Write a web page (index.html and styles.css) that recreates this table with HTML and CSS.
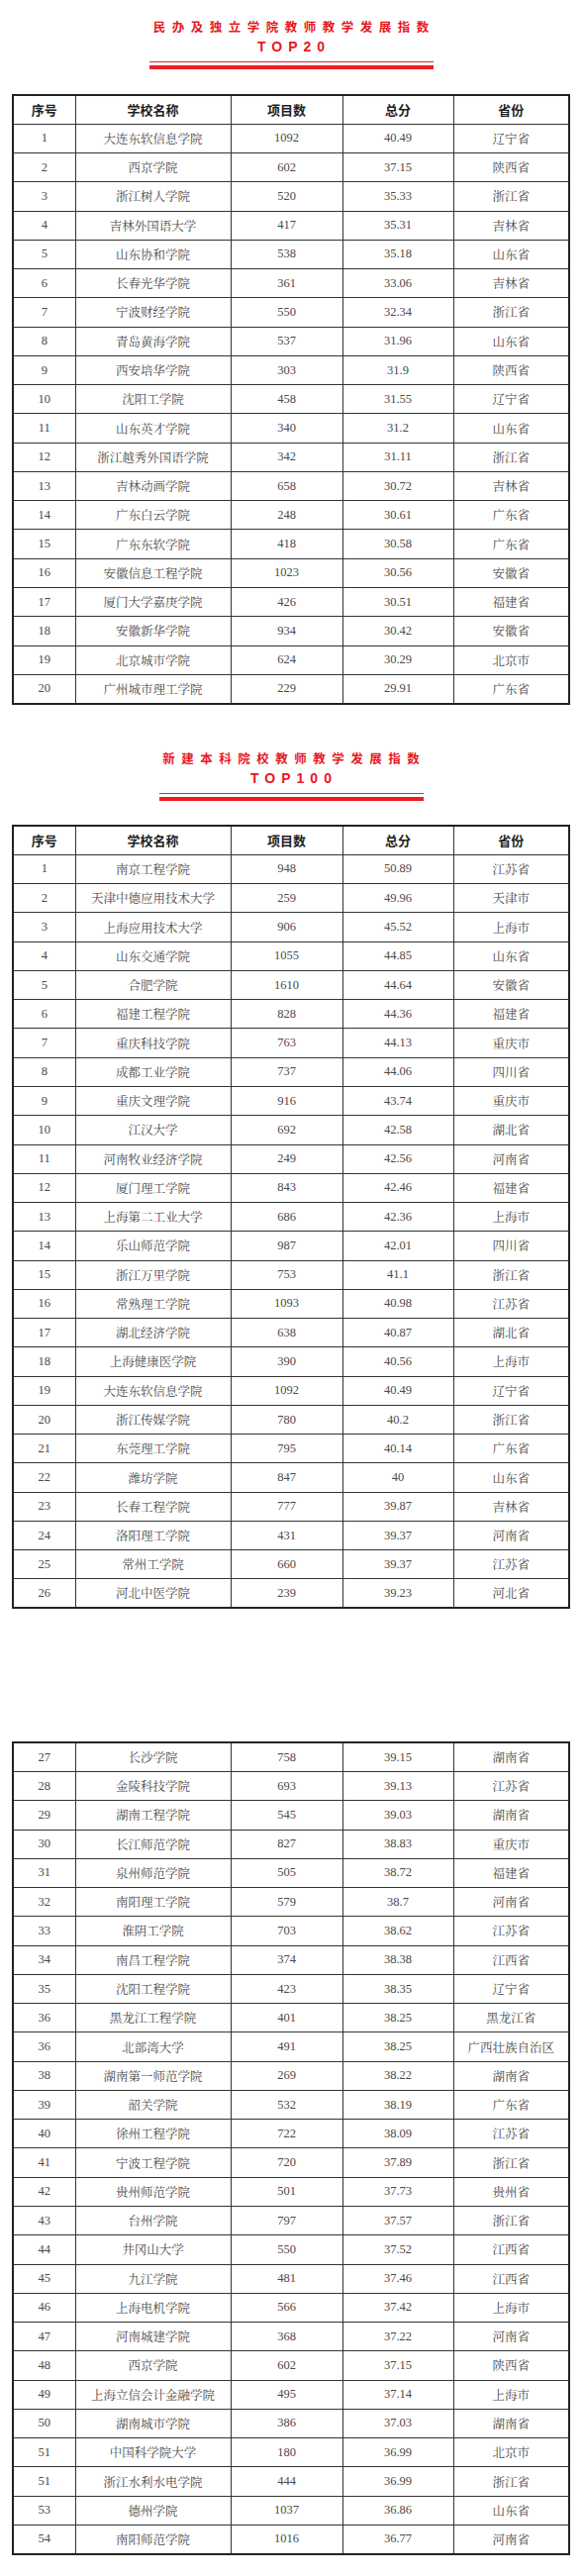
FILE: index.html
```html
<!DOCTYPE html>
<html lang="zh-CN">
<head>
<meta charset="utf-8">
<title>教师教学发展指数</title>
<link rel="stylesheet" href="styles.css">
</head>
<body>
<div class="page">
  <section class="block block-first">
    <h2 class="title"><span class="title-cn">民办及独立学院教师教学发展指数</span><span class="title-en">TOP20</span></h2>
    <div class="rule rule-1"><div class="rule-thin"></div><div class="rule-thick"></div></div>
    <table class="rank">
      <colgroup><col class="c1"><col class="c2"><col class="c3"><col class="c4"><col class="c5"></colgroup>
      <thead><tr><th>序号</th><th>学校名称</th><th>项目数</th><th>总分</th><th>省份</th></tr></thead>
      <tbody>
        <tr><td>1</td><td>大连东软信息学院</td><td>1092</td><td>40.49</td><td>辽宁省</td></tr>
        <tr><td>2</td><td>西京学院</td><td>602</td><td>37.15</td><td>陕西省</td></tr>
        <tr><td>3</td><td>浙江树人学院</td><td>520</td><td>35.33</td><td>浙江省</td></tr>
        <tr><td>4</td><td>吉林外国语大学</td><td>417</td><td>35.31</td><td>吉林省</td></tr>
        <tr><td>5</td><td>山东协和学院</td><td>538</td><td>35.18</td><td>山东省</td></tr>
        <tr><td>6</td><td>长春光华学院</td><td>361</td><td>33.06</td><td>吉林省</td></tr>
        <tr><td>7</td><td>宁波财经学院</td><td>550</td><td>32.34</td><td>浙江省</td></tr>
        <tr><td>8</td><td>青岛黄海学院</td><td>537</td><td>31.96</td><td>山东省</td></tr>
        <tr><td>9</td><td>西安培华学院</td><td>303</td><td>31.9</td><td>陕西省</td></tr>
        <tr><td>10</td><td>沈阳工学院</td><td>458</td><td>31.55</td><td>辽宁省</td></tr>
        <tr><td>11</td><td>山东英才学院</td><td>340</td><td>31.2</td><td>山东省</td></tr>
        <tr><td>12</td><td>浙江越秀外国语学院</td><td>342</td><td>31.11</td><td>浙江省</td></tr>
        <tr><td>13</td><td>吉林动画学院</td><td>658</td><td>30.72</td><td>吉林省</td></tr>
        <tr><td>14</td><td>广东白云学院</td><td>248</td><td>30.61</td><td>广东省</td></tr>
        <tr><td>15</td><td>广东东软学院</td><td>418</td><td>30.58</td><td>广东省</td></tr>
        <tr><td>16</td><td>安徽信息工程学院</td><td>1023</td><td>30.56</td><td>安徽省</td></tr>
        <tr><td>17</td><td>厦门大学嘉庚学院</td><td>426</td><td>30.51</td><td>福建省</td></tr>
        <tr><td>18</td><td>安徽新华学院</td><td>934</td><td>30.42</td><td>安徽省</td></tr>
        <tr><td>19</td><td>北京城市学院</td><td>624</td><td>30.29</td><td>北京市</td></tr>
        <tr><td>20</td><td>广州城市理工学院</td><td>229</td><td>29.91</td><td>广东省</td></tr>
      </tbody>
    </table>
  </section>

  <section class="block block-second">
    <h2 class="title"><span class="title-cn">新建本科院校教师教学发展指数</span><span class="title-en">TOP100</span></h2>
    <div class="rule rule-2"><div class="rule-thin"></div><div class="rule-thick"></div></div>
    <table class="rank">
      <colgroup><col class="c1"><col class="c2"><col class="c3"><col class="c4"><col class="c5"></colgroup>
      <thead><tr><th>序号</th><th>学校名称</th><th>项目数</th><th>总分</th><th>省份</th></tr></thead>
      <tbody>
        <tr><td>1</td><td>南京工程学院</td><td>948</td><td>50.89</td><td>江苏省</td></tr>
        <tr><td>2</td><td>天津中德应用技术大学</td><td>259</td><td>49.96</td><td>天津市</td></tr>
        <tr><td>3</td><td>上海应用技术大学</td><td>906</td><td>45.52</td><td>上海市</td></tr>
        <tr><td>4</td><td>山东交通学院</td><td>1055</td><td>44.85</td><td>山东省</td></tr>
        <tr><td>5</td><td>合肥学院</td><td>1610</td><td>44.64</td><td>安徽省</td></tr>
        <tr><td>6</td><td>福建工程学院</td><td>828</td><td>44.36</td><td>福建省</td></tr>
        <tr><td>7</td><td>重庆科技学院</td><td>763</td><td>44.13</td><td>重庆市</td></tr>
        <tr><td>8</td><td>成都工业学院</td><td>737</td><td>44.06</td><td>四川省</td></tr>
        <tr><td>9</td><td>重庆文理学院</td><td>916</td><td>43.74</td><td>重庆市</td></tr>
        <tr><td>10</td><td>江汉大学</td><td>692</td><td>42.58</td><td>湖北省</td></tr>
        <tr><td>11</td><td>河南牧业经济学院</td><td>249</td><td>42.56</td><td>河南省</td></tr>
        <tr><td>12</td><td>厦门理工学院</td><td>843</td><td>42.46</td><td>福建省</td></tr>
        <tr><td>13</td><td>上海第二工业大学</td><td>686</td><td>42.36</td><td>上海市</td></tr>
        <tr><td>14</td><td>乐山师范学院</td><td>987</td><td>42.01</td><td>四川省</td></tr>
        <tr><td>15</td><td>浙江万里学院</td><td>753</td><td>41.1</td><td>浙江省</td></tr>
        <tr><td>16</td><td>常熟理工学院</td><td>1093</td><td>40.98</td><td>江苏省</td></tr>
        <tr><td>17</td><td>湖北经济学院</td><td>638</td><td>40.87</td><td>湖北省</td></tr>
        <tr><td>18</td><td>上海健康医学院</td><td>390</td><td>40.56</td><td>上海市</td></tr>
        <tr><td>19</td><td>大连东软信息学院</td><td>1092</td><td>40.49</td><td>辽宁省</td></tr>
        <tr><td>20</td><td>浙江传媒学院</td><td>780</td><td>40.2</td><td>浙江省</td></tr>
        <tr><td>21</td><td>东莞理工学院</td><td>795</td><td>40.14</td><td>广东省</td></tr>
        <tr><td>22</td><td>潍坊学院</td><td>847</td><td>40</td><td>山东省</td></tr>
        <tr><td>23</td><td>长春工程学院</td><td>777</td><td>39.87</td><td>吉林省</td></tr>
        <tr><td>24</td><td>洛阳理工学院</td><td>431</td><td>39.37</td><td>河南省</td></tr>
        <tr><td>25</td><td>常州工学院</td><td>660</td><td>39.37</td><td>江苏省</td></tr>
        <tr><td>26</td><td>河北中医学院</td><td>239</td><td>39.23</td><td>河北省</td></tr>
      </tbody>
    </table>

    <table class="rank rank-cont">
      <colgroup><col class="c1"><col class="c2"><col class="c3"><col class="c4"><col class="c5"></colgroup>
      <tbody>
        <tr><td>27</td><td>长沙学院</td><td>758</td><td>39.15</td><td>湖南省</td></tr>
        <tr><td>28</td><td>金陵科技学院</td><td>693</td><td>39.13</td><td>江苏省</td></tr>
        <tr><td>29</td><td>湖南工程学院</td><td>545</td><td>39.03</td><td>湖南省</td></tr>
        <tr><td>30</td><td>长江师范学院</td><td>827</td><td>38.83</td><td>重庆市</td></tr>
        <tr><td>31</td><td>泉州师范学院</td><td>505</td><td>38.72</td><td>福建省</td></tr>
        <tr><td>32</td><td>南阳理工学院</td><td>579</td><td>38.7</td><td>河南省</td></tr>
        <tr><td>33</td><td>淮阴工学院</td><td>703</td><td>38.62</td><td>江苏省</td></tr>
        <tr><td>34</td><td>南昌工程学院</td><td>374</td><td>38.38</td><td>江西省</td></tr>
        <tr><td>35</td><td>沈阳工程学院</td><td>423</td><td>38.35</td><td>辽宁省</td></tr>
        <tr><td>36</td><td>黑龙江工程学院</td><td>401</td><td>38.25</td><td>黑龙江省</td></tr>
        <tr><td>36</td><td>北部湾大学</td><td>491</td><td>38.25</td><td>广西壮族自治区</td></tr>
        <tr><td>38</td><td>湖南第一师范学院</td><td>269</td><td>38.22</td><td>湖南省</td></tr>
        <tr><td>39</td><td>韶关学院</td><td>532</td><td>38.19</td><td>广东省</td></tr>
        <tr><td>40</td><td>徐州工程学院</td><td>722</td><td>38.09</td><td>江苏省</td></tr>
        <tr><td>41</td><td>宁波工程学院</td><td>720</td><td>37.89</td><td>浙江省</td></tr>
        <tr><td>42</td><td>贵州师范学院</td><td>501</td><td>37.73</td><td>贵州省</td></tr>
        <tr><td>43</td><td>台州学院</td><td>797</td><td>37.57</td><td>浙江省</td></tr>
        <tr><td>44</td><td>井冈山大学</td><td>550</td><td>37.52</td><td>江西省</td></tr>
        <tr><td>45</td><td>九江学院</td><td>481</td><td>37.46</td><td>江西省</td></tr>
        <tr><td>46</td><td>上海电机学院</td><td>566</td><td>37.42</td><td>上海市</td></tr>
        <tr><td>47</td><td>河南城建学院</td><td>368</td><td>37.22</td><td>河南省</td></tr>
        <tr><td>48</td><td>西京学院</td><td>602</td><td>37.15</td><td>陕西省</td></tr>
        <tr><td>49</td><td>上海立信会计金融学院</td><td>495</td><td>37.14</td><td>上海市</td></tr>
        <tr><td>50</td><td>湖南城市学院</td><td>386</td><td>37.03</td><td>湖南省</td></tr>
        <tr><td>51</td><td>中国科学院大学</td><td>180</td><td>36.99</td><td>北京市</td></tr>
        <tr><td>51</td><td>浙江水利水电学院</td><td>444</td><td>36.99</td><td>浙江省</td></tr>
        <tr><td>53</td><td>德州学院</td><td>1037</td><td>36.86</td><td>山东省</td></tr>
        <tr><td>54</td><td>南阳师范学院</td><td>1016</td><td>36.77</td><td>河南省</td></tr>
      </tbody>
    </table>
  </section>
</div>
</body>
</html>
```
FILE: styles.css
```css
html, body {
  margin: 0;
  padding: 0;
  background: #ffffff;
}

.page {
  width: 590px;
  height: 2602px;
  overflow: hidden;
  padding: 0 15px 0 13px;
  box-sizing: border-box;
  font-family: "Liberation Serif", "Noto Serif CJK SC", "Noto Sans CJK SC", serif;
}

.block {
  display: flex;
  flex-direction: column;
  align-items: center;
}

.block-first {
  padding-top: 16px;
}

.block-second {
  padding-top: 43px;
}

.title {
  margin: 0;
  display: flex;
  flex-direction: column;
  align-items: center;
  color: #e8181e;
  font-weight: 700;
}

.title-cn {
  display: block;
  font-family: "Noto Sans CJK SC", sans-serif;
  font-size: 12.5px;
  line-height: 21px;
  letter-spacing: 6.5px;
  padding-left: 6.5px;
}

.title-en {
  display: block;
  font-family: "Liberation Sans", "Noto Sans CJK SC", sans-serif;
  font-size: 14px;
  line-height: 21px;
  letter-spacing: 6px;
  padding-left: 6px;
}

.rule {
  display: flex;
  flex-direction: column;
  gap: 3px;
  margin-top: 4px;
  margin-bottom: 25px;
}

.rule-1 { width: 287px; }
.rule-2 { width: 267px; margin-bottom: 24.5px; }

.rule-thin {
  height: 1px;
  background: #ee1d24;
}

.rule-thick {
  height: 4px;
  background: #ee1d24;
}

.rank {
  width: 562px;
  border-collapse: collapse;
  border: 2px solid #222222;
  table-layout: fixed;
}

.rank-cont {
  margin-top: 134px;
}

.c1 { width: 63px; }
.c2 { width: 157px; }
.c3 { width: 113px; }
.c4 { width: 112px; }
.c5 { width: 117px; }

.rank tr {
  height: 29.27px;
}

.rank th,
.rank td {
  border: 1px solid #333333;
  padding: 0;
  text-align: center;
  vertical-align: middle;
  white-space: nowrap;
}

.rank th {
  font-family: "Noto Sans CJK SC", sans-serif;
  font-weight: 700;
  font-size: 13px;
  color: #1e1e1e;
}

.rank td {
  font-size: 12.5px;
  color: #4a4a4a;
  font-weight: 400;
}
```
